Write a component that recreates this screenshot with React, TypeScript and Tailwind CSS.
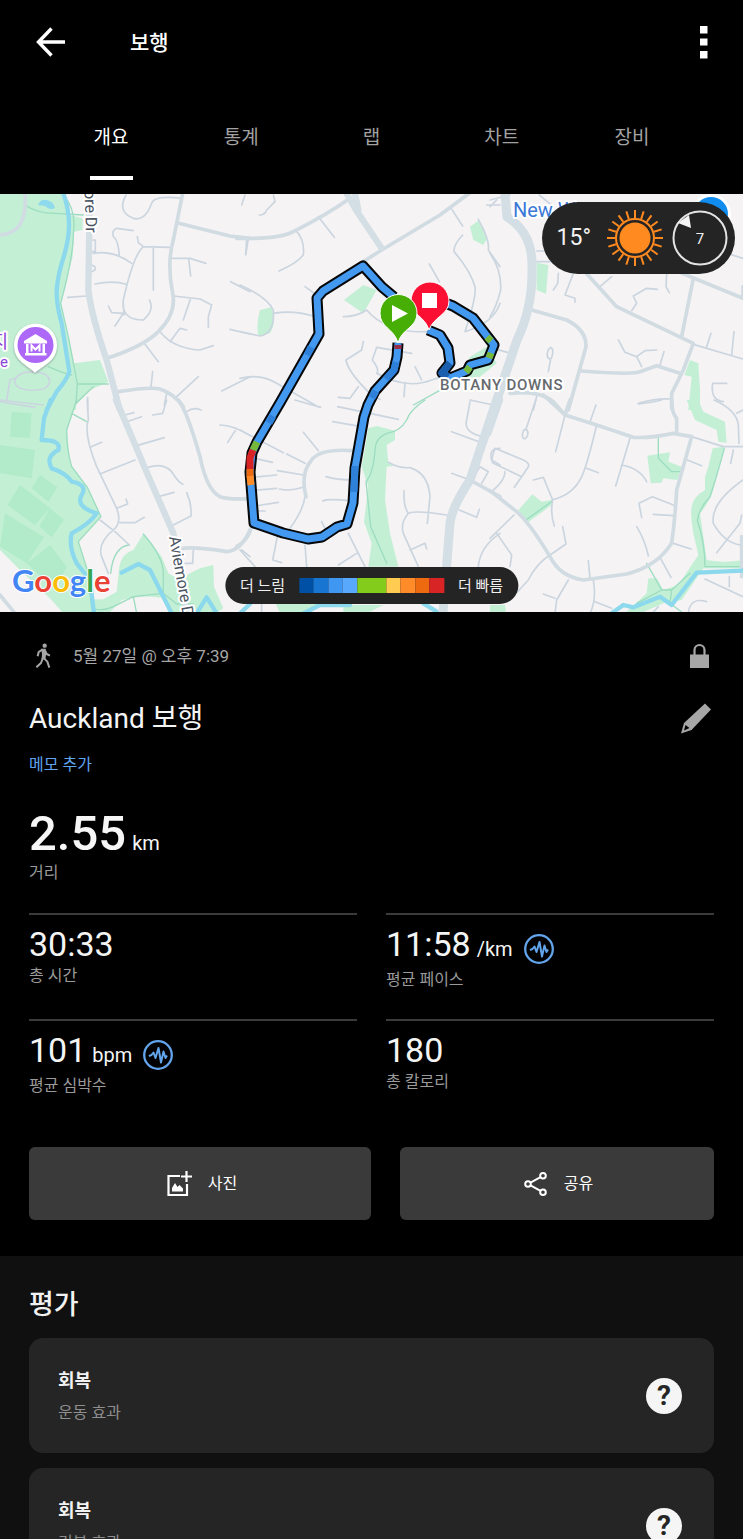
import type { ReactNode } from "react";

const tabs = ["개요", "통계", "랩", "차트", "장비"];

const paceColors = [
  "flex-1 bg-[#0050a5]",
  "flex-1 bg-[#1876d2]",
  "flex-1 bg-[#4097f2]",
  "flex-1 bg-[#58a8fd]",
  "flex-2 bg-[#84cc1c]",
  "flex-1 bg-[#ffcb50]",
  "flex-1 bg-[#ff8c28]",
  "flex-1 bg-[#ee6a10]",
  "flex-1 bg-[#d82424]",
];

type Tile = {
  x: number;
  y: number;
  parks: string;
  fields?: string;
  minor: string;
  mid: string;
  major: string;
  trails?: string;
  water?: string;
};

const tiles: Tile[] = [
  {
    x: 0,
    y: 190,
    parks:
      "M0 0H190L210 75L248 85V120L222 125L218 200L182 340L205 440L222 520L300 510L325 575L270 600L228 645V660H0Z",
    minor:
      "M378 15Q350 65 400 85Q435 95 455 40Q462 15 545 25M400 122L350 115Q335 120 340 140Q355 150 358 198M280 190Q340 180 395 220M508 172L430 170Q400 195 370 330Q362 390 430 390Q465 360 448 330M430 170L415 158L412 140M460 170V300M285 282Q340 270 378 283M325 348L335 368L370 370L345 408M370 340L372 375M203 322L260 318M518 205L570 205L618 220M566 205L572 258M520 318L600 327L635 345L625 380V412M572 325L550 390M480 425Q520 475 600 480L640 467M510 455L540 415L560 420M435 463L475 515M453 590L458 545M530 620L595 560M665 603L750 560M690 418L750 432M692 275L750 305M745 145L738 190M500 610L493 645M725 45L735 15M263 622V660M45 570Q55 545 100 545Q155 550 148 580Q140 605 85 600Q40 595 45 570M0 630L130 645M20 630L30 570L45 565M270 150h16v35h-16M275 225l10 5v10l-10 5",
    mid: "M530 98L690 138L750 145M355 605Q450 590 480 597Q520 610 550 650M320 505Q430 470 475 425Q530 370 518 310Q500 220 520 150L548 10M0 135Q85 130 75 10",
    major: "M268 10V110L265 300Q275 380 320 510L358 655",
    trails:
      "M75 45Q110 70 165 70L250 75M190 15Q230 60 220 130Q220 200 182 340L205 440L232 582H325M145 530Q190 550 215 555M232 582L228 640L280 590",
    water:
      "M190 10C215 80 212 140 185 220C165 290 165 330 185 400L208 545Q200 570 170 605L140 660",
  },
  {
    x: 0,
    y: 400,
    parks:
      "M0 0H232L200 90L210 190L262 262L303 350L235 425L262 510L275 640H190L150 595L60 510L0 450ZM230 600L310 598L350 575L358 500Q365 460 400 450L430 402L485 470L505 520L540 540L570 520L600 505L640 495L642 560L670 625L640 645H215Z",
    fields:
      "M35 35L95 40L90 115L30 110ZM0 135L105 150L95 235L0 220ZM120 225L172 262L145 305L95 265ZM60 255L150 325L105 375L22 315ZM150 325L192 360L155 412L118 378ZM15 340L132 412L80 490L0 440ZM80 490L150 435L200 500L165 570Z",
    minor:
      "M262 0L265 60Q250 100 290 200L350 325Q365 365 345 385Q290 430 305 470L325 520M305 220L405 180M270 142L305 127M350 325L383 312L378 297M360 368L405 368L433 352M300 360L345 395L388 435M410 137L493 113M380 65L425 50M375 45L402 38M458 45L488 40L500 0M560 35Q580 20 603 30M435 205Q500 180 525 230Q535 245 548 253M475 290L522 277M520 375L573 348Q575 310 560 278M660 75Q700 75 750 107M710 85L683 127M580 450L578 490H555M725 450L750 470M0 5L105 22",
    mid: "M535 0Q560 30 600 170Q620 270 660 290Q690 300 750 295M545 445Q590 440 680 455Q725 450 750 390M0 585L45 640",
    major: "M348 0Q400 120 435 205L520 400L560 640",
    trails:
      "M230 0L200 90Q200 150 215 200L262 262L303 350L235 425L262 510L275 625Q310 635 340 620L400 590L490 580L530 612H580M388 435Q340 440 332 520M430 402Q490 470 490 520V590M215 40L260 65M400 590L410 640",
    water:
      "M152 0L132 55L125 120Q185 120 175 150Q135 170 155 205Q200 220 215 245Q265 255 245 285Q225 320 290 340Q270 370 215 400Q205 440 230 490L270 540L282 640M365 518L415 492L450 510L515 640M590 640L620 592L650 640",
  },
  {
    x: 240,
    y: 190,
    parks:
      "M370 285L410 300L370 370L312 330ZM60 360L95 352Q112 395 90 430L55 438Q48 400 60 360ZM690 110L715 92L742 145L730 165L700 150ZM690 500L740 470L770 520L720 560L650 570Z",
    minor:
      "M100 15L105 35L80 60Q75 75 58 75M235 80L283 142M20 150L17 195M168 122Q195 150 190 195Q170 220 117 243M630 50L668 108M668 135Q640 165 642 185Q690 240 705 290Q710 320 675 425M715 88Q750 150 745 180L780 230M780 340Q760 400 675 425M0 285Q80 320 100 360Q105 430 60 438L0 425M100 370Q160 360 220 378M310 380Q350 380 380 360Q440 430 560 425M568 222L598 275M195 290L230 315M515 490L410 472L397 510Q420 540 410 550Q500 600 575 570Q640 550 690 530M0 565Q60 550 110 580L225 645M370 455L365 480L318 510Q325 550 400 620L420 628M295 622L330 625L355 590M525 530L545 570M495 578L492 620M740 45H780M750 50L770 30",
    mid: "M-10 145Q120 148 160 125Q260 75 330 25M370 215L425 180L600 75L690 8",
    major: "M320 10L348 60L425 175M345 10L355 60",
    trails: "M520 645L620 590",
  },
  {
    x: 490,
    y: 190,
    parks:
      "M140 218L175 225L168 312L140 300ZM600 510L625 520L630 600V660H595L605 560L583 555Z",
    minor:
      "M0 190Q35 240 32 300Q20 350 0 380M20 478L55 488M140 215H200M140 183H160M205 250L203 280L190 300M250 250L225 315L255 325V337M330 290L365 260M425 362L440 340L430 318L470 295L502 298M530 250L528 290L538 308M650 470L663 430M725 495L732 425M385 450L405 487L440 500L455 530M440 500L465 482L500 480M510 525L522 485M175 545L182 507M182 473Q190 475 188 490Q185 508 180 507Q170 505 172 490Q175 475 182 473M668 580H710M668 580Q660 630 700 635M445 640Q500 625 540 627M148 15L190 50M0 30L60 15M610 463L759 507M680 180L759 205M140 620L130 660",
    mid: "M125 360L230 390Q290 420 288 470L235 660M275 543Q430 555 450 545L500 527L570 550M280 240L380 350L610 460L580 540L545 610V655M610 265L575 440M540 235L759 325L759 290M60 610Q150 600 190 635L225 675",
    major: "M45 10L50 80Q130 130 125 230Q130 350 80 450L15 660",
  },
  {
    x: 240,
    y: 400,
    parks:
      "M385 85L410 78L465 92V120L440 135L445 190L462 198L440 200L435 300L450 400L475 500H385L395 430L372 365L385 260L365 200ZM105 605H240L210 640H120ZM310 615H430L380 640H310Z",
    minor:
      "M0 90L130 158M190 97L235 152M140 162L195 190M112 212L190 225M45 175L97 187M35 232L110 225M30 272L110 265M118 267Q150 275 188 262M45 318L115 307M55 333H75M258 230Q290 240 340 240M248 303Q265 295 335 303M293 20L475 58M278 65L365 80M165 0L242 22M445 187Q475 205 510 203Q565 220 570 290L562 370M492 272Q490 320 505 340Q480 370 490 400L535 500M505 340Q530 330 620 345M510 450L555 430L560 447M690 5L680 60Q670 95 720 108M635 95L725 128M635 220L690 240M658 330L710 352L718 328M780 400Q720 440 715 500M115 395L98 480L125 488M195 435L200 500M295 495L350 460M325 400Q360 470 375 500M0 450L45 500M245 365L260 395M195 290Q190 330 150 385M690 250L720 200L745 215L725 250M780 145Q745 145 755 180L780 195M65 610V640M690 0L760 15",
    mid: "M340 152Q240 145 215 180Q180 220 198 290M690 240L780 290M-10 440Q25 420 35 380M0 297H15",
    major: "M775 -10L690 240Q635 320 630 370L605 640",
    trails: "M555 0Q510 30 500 60Q480 95 440 100Q405 115 405 150Q400 220 378 245L392 380L440 490",
    water: "M0 640L30 612M190 640L240 615H330M550 610L590 635",
  },
  {
    x: 490,
    y: 400,
    parks:
      "M590 0L615 60L680 90L685 125L710 128L705 65L640 35L625 0ZM668 145L703 140L675 250Q665 300 630 340L650 480Q700 490 759 480V505H640L575 600L520 610L440 645H400L470 580L475 535H500L520 570L565 555L625 465L610 400Q600 340 605 320Q610 290 645 270L645 230L655 200ZM472 167L540 157L535 185L575 200L562 240L520 235L515 248L482 250ZM85 330L127 283L155 305L185 300V315L110 370ZM0 615H45L48 640H0Z",
    minor:
      "M605 110L700 140H759M320 75Q290 200 275 230Q250 285 185 300M197 155L225 45M300 65L318 15M420 115L390 215L377 258M395 195Q450 205 470 245M290 205L325 218M137 0L108 88M106 88Q116 90 113 105Q108 118 102 116Q95 112 98 100Q100 88 106 88M15 145L100 180Q120 190 115 200L95 230L10 190Q0 185 15 145M95 230L73 262M45 215Q45 240 10 270M130 240L160 232L188 300Q180 340 193 378M218 380L228 432L180 465Q140 490 115 540L60 600M72 345L0 415M20 400L65 465L60 500M295 482L300 535M235 540L200 600L195 640M310 540Q320 600 300 640M440 380Q465 420 475 468M510 472L543 532M550 430L603 447M550 315L487 290L447 310L455 353M490 343L550 347M592 180L635 197M672 0Q740 30 745 75L747 130M740 40L759 30M730 150L722 190M759 240Q660 310 670 370Q700 425 750 435M680 458L750 370L755 345M445 12Q480 10 515 0M645 537L759 590M718 530V560M650 605Q600 590 595 640M160 582L195 595M315 605L365 625M505 620L487 640",
    mid: "M160 -15L225 45L320 75L430 112Q480 115 550 100L605 110L560 270Q555 360 545 430Q500 500 410 522L280 540Q210 530 180 470Q120 370 80 335L0 272M240 0L225 45M545 0Q545 40 560 55V100M755 410V530",
    major: "M30 0L-5 100",
    trails:
      "M505 112V175L545 215H570M105 362L185 305M703 145Q680 230 660 290Q630 320 622 360Q645 430 645 500H759M470 490L515 570H545L600 520M515 570L440 610M545 570L540 610L580 640",
    water: "M365 640L400 615L430 622L510 590L545 615L620 518L759 512",
  },
];

const route =
  "M398 343L397 357L394 370L375 391L368 405L364 417L355 468L353 503L347 524L337 527L322 537L308 539L283 533L254 523L250 472L252 453L257 442L281 401L319 334L317 298L323 291L363 266L382 287L394 297M440 301L453 306L473 318L494 345L488 360L470 365L467 371L450 378L442 373L450 363L448 348L440 335L428 330";

function Layer({ pick, ...rest }: { pick: (t: Tile) => string | undefined } & React.SVGProps<SVGGElement>) {
  return (
    <g {...rest}>
      {tiles.map((t) => (
        <path key={`${t.x}-${t.y}`} transform={`translate(${t.x} ${t.y}) scale(0.33333)`} d={pick(t) || "M0 0"} />
      ))}
    </g>
  );
}

function MapCanvas() {
  return (
    <svg
      className="block h-full w-full"
      viewBox="0 194 743 418"
      preserveAspectRatio="xMidYMid slice"
      role="img"
      aria-label="경로 지도"
    >
      <rect y="190" width="743" height="425" fill="#f5f3f4" />
      <Layer pick={(t) => t.parks} fill="#c3f0d5" />
      <path d="M108 614L122 600Q145 594 162 598L175 614Z" fill="#f5f3f4" />
      <Layer pick={(t) => t.fields} fill="#b1ebca" />
      <path d="M38 205Q40 199 47 200Q54 202 55 208Q50 211 45 206Z" fill="#90daee" />
      <g fill="none" strokeLinecap="round" strokeLinejoin="round">
        <Layer pick={(t) => t.trails} stroke="#9cdcc0" strokeWidth="4" />
        <Layer pick={(t) => t.minor} stroke="#cbd5df" strokeWidth="5" />
        <Layer pick={(t) => t.mid} stroke="#d1dbe2" strokeWidth="11" />
        <Layer pick={(t) => t.water} stroke="#8cd9ee" strokeWidth="13" />
        <Layer pick={(t) => t.major} stroke="#d3dee5" strokeWidth="19" />
        <path
          d="M505 194L507 217Q533 233 532 267Q533 307 517 340L495 405L470 480Q452 507 450 523L443 612"
          stroke="#d3dee5"
          strokeWidth="9"
        />
      </g>

      <g fill="none" strokeLinejoin="round">
        <path d={route} stroke="#050708" strokeWidth="11" />
        <path d={route} stroke="#4398f0" strokeWidth="7" />
        <g strokeWidth="7">
          <path d="M398 345V349" stroke="#9c2f45" />
          <path d="M396 362L394 370L386 379M355 466L354 492M311 347L307 355M273 416L269 423M376 391L372 398" stroke="#2e80d8" />
          <path d="M450 363L442 373L448 377" stroke="#1a5fae" />
          <path d="M257 442L253 450M487 337L491 341M491 353L489 358M470 367L466 372" stroke="#76b83a" />
          <path d="M253 450L250 458V469" stroke="#d82424" />
          <path d="M250 469V477" stroke="#ee6a10" />
          <path d="M250 476L251 485" stroke="#ff8c28" />
        </g>
      </g>

      <g stroke="#fff">
        <path
          d="M429 330C425 316 411 315 411 301A18.500 18.500 0 0 1 449 301C449 315 434 316 429 330Z"
          fill="#fb0f32"
          strokeWidth="1"
        />
        <path
          d="M398 343C394 328 380 328 380 313A18.500 18.500 0 0 1 417 313C417 328 402 328 398 343Z"
          fill="#46ae04"
          strokeWidth="1"
        />
      </g>
      <path d="M422 293H437V308H422ZM392 305L408 313.500L392 322Z" fill="#fff" />

      <circle cx="711" cy="214" r="20" fill="#fff" />
      <circle cx="711" cy="214" r="17" fill="#118df0" />

      <g filter="drop-shadow(0 1px 1px rgb(0 0 0 / 0.3))">
        <path d="M35 373C28 365 14 362 14 345A21 21 0 0 1 57 345C57 362 43 365 35 373Z" fill="#fff" />
      </g>
      <circle cx="35.500" cy="345" r="18" fill="#ad68f7" />
      <path
        d="M35.500 334L47 341V343.500H24V341ZM26 344H28.500V353H26ZM42.500 344H45V353H42.500ZM25 353H46.500V355.500H25Z"
        fill="#fff"
      />
      <path d="M31.500 351.500V345.500L35.500 349.500L39.500 345.500V351.500" fill="none" stroke="#fff" strokeWidth="2" />

      <g stroke="#fff" strokeWidth="4" strokeLinejoin="round" paintOrder="stroke">
        <text className="text-[15px] font-medium tracking-wider" x="440" y="390" fill="#666a6e">
          BOTANY DOWNS
        </text>
        <text className="text-[20px]" x="513" y="217" fill="#3b78d8">
          New W
        </text>
        <text className="text-[16px]" transform="translate(169 537) rotate(80)" fill="#4b5563">
          Aviemore Dr
        </text>
        <text className="text-[16px]" transform="translate(86 233) rotate(88)" textAnchor="end" fill="#4b5563">
          Aviemore Dr
        </text>
        <text className="text-[18px]" x="8" y="348" textAnchor="end" fill="#8b46d8">
          지
        </text>
        <text className="text-[15px]" x="8" y="367" textAnchor="end" fill="#8b46d8">
          e
        </text>
      </g>
      <text
        className="font-['Lato'] text-[31px] font-bold"
        x="12"
        y="592"
        stroke="#fff"
        strokeWidth="2"
        strokeLinejoin="round"
        paintOrder="stroke"
      >
        <tspan fill="#4285f4">G</tspan>
        <tspan fill="#ea4335">o</tspan>
        <tspan fill="#fbbc05">o</tspan>
        <tspan fill="#4285f4">g</tspan>
        <tspan fill="#34a853">l</tspan>
        <tspan fill="#ea4335">e</tspan>
      </text>
    </svg>
  );
}

function SunIcon() {
  return (
    <svg className="size-[56px]" viewBox="-28 -28 56 56" aria-hidden="true">
      <circle r="15.500" fill="#ff8a20" />
      <circle r="19" fill="none" stroke="#ff8a20" strokeWidth="2" />
      {Array.from({ length: 20 }, (_, i) => (
        <path key={i} d="M0 -20V-28" stroke="#ff8a20" strokeWidth="2" transform={`rotate(${i * 18})`} />
      ))}
    </svg>
  );
}

function WindDial() {
  return (
    <svg className="size-[56px]" viewBox="-28 -28 56 56" role="img" aria-label="풍속 7">
      <circle r="26.500" fill="none" stroke="#e4e4e4" strokeWidth="2" />
      <path d="M-22 -15L-11 -23L-9 -10Z" fill="#f4f4f4" />
      <text className="text-[15px]" y="6" textAnchor="middle" fill="#f0f0f0">
        7
      </text>
    </svg>
  );
}

function WalkIcon() {
  return (
    <svg
      className="size-7"
      viewBox="27 21 84 84"
      fill="none"
      stroke="currentColor"
      strokeWidth="6"
      strokeLinejoin="round"
      aria-hidden="true"
    >
      <circle cx="74" cy="32" r="6.500" fill="currentColor" stroke="none" />
      <path d="M63 41L77 41L79 54L76 73L65 73L66 56Z" fill="currentColor" stroke="none" />
      <path d="M67 44L56 51L53 64M75 46L80 57L90 62M72 70L82 80L88 98M69 68L63 84L49 97" />
    </svg>
  );
}

function PulseIcon() {
  return (
    <svg
      className="mb-[3px] ml-[11px] mt-[9px] size-[30px] shrink-0"
      viewBox="0 0 30 30"
      fill="none"
      stroke="#62a5ec"
      aria-hidden="true"
    >
      <circle cx="15" cy="15" r="13.800" strokeWidth="2.300" />
      <path d="M6 16L8.500 15L10.500 12.500L12.500 18L15.500 8L18 22.500L20.500 11.500L22.500 18L24 15.500" strokeWidth="2" strokeLinejoin="round" />
    </svg>
  );
}

function Stat({ value, unit, label, pulse }: { value: string; unit?: string; label: string; pulse?: boolean }) {
  return (
    <div className="h-[106px] border-t-2 border-[#3b3b3b] pt-[10px]">
      <div className="flex items-start">
        <p className="text-[34px] leading-[38px] text-[#f4f4f4]">
          {value}
          {unit && <span className="ml-[6px] text-[20px] leading-none">{unit}</span>}
        </p>
        {pulse && <PulseIcon />}
      </div>
      <p className="pt-px text-[16px] leading-6 text-[#9a9a9a]">{label}</p>
    </div>
  );
}

function ActionButton({ className, icon, children }: { className: string; icon: ReactNode; children: ReactNode }) {
  return (
    <button
      type="button"
      className={`${className} flex h-[73px] items-center justify-center gap-4 rounded-md bg-[#3a3a3a] pl-[3px] text-[16px] text-white`}
    >
      {icon}
      {children}
    </button>
  );
}

function RatingCard({ title, subtitle }: { title: string; subtitle: string }) {
  return (
    <article className="flex items-center justify-between rounded-[14px] bg-[#252525] pb-7 pl-[29px] pr-8 pt-[29px]">
      <div>
        <h3 className="text-[18px] font-bold leading-7 text-[#f2f2f2]">{title}</h3>
        <p className="mt-[6px] text-[16px] leading-6 text-[#8e8e8e]">{subtitle}</p>
      </div>
      <button
        type="button"
        aria-label={`${title} 도움말`}
        className="flex size-9 items-center justify-center rounded-full bg-[#f5f5f5] text-[28px] font-bold leading-9 text-[#252525]"
      >
        ?
      </button>
    </article>
  );
}

export default function App() {
  return (
    <div
      lang="ko"
      className="flex h-screen flex-col bg-black font-['Roboto','Noto_Sans_CJK_KR',sans-serif] text-white"
    >
      <header className="shrink-0 pb-[14px]">
        <div className="flex h-[84px] items-center pl-9 pr-[31px]">
          <button type="button" aria-label="뒤로">
            <svg className="size-[30px]" viewBox="0 0 30 30" fill="none" stroke="#fff" strokeWidth="3.400">
              <path d="M29 15H3M15.500 1.500L2.500 15L15.500 28.500" />
            </svg>
          </button>
          <h1 className="ml-16 flex-1 pt-[2px] text-[21px] font-medium leading-7">보행</h1>
          <button type="button" aria-label="메뉴">
            <svg className="h-[34px] w-[17px]" viewBox="0 0 17 34" fill="#fff">
              <path d="M5 1H12.500V8.500H5ZM5 13.500H12.500V20.500H5ZM5 26H12.500V33.500H5Z" />
            </svg>
          </button>
        </div>
        <nav className="flex px-[46px] pt-10" role="tablist">
          {tabs.map((tab, i) => (
            <button key={tab} type="button" role="tab" aria-selected={i === 0} className="flex flex-1 justify-center">
              <span
                className={
                  i === 0
                    ? "border-b-4 border-white px-1 pb-6 text-[19px] leading-7 text-white"
                    : "border-b-4 border-transparent px-1 pb-6 text-[19px] leading-7 text-[#a3a3a3]"
                }
              >
                {tab}
              </span>
            </button>
          ))}
        </nav>
      </header>

      <main className="min-h-0 flex-1 overflow-y-auto [scrollbar-width:none]">
        <section className="relative h-[418px]">
          <MapCanvas />
          <div className="absolute right-2 top-2 flex h-[72px] items-center rounded-full bg-[#242424] pl-[15px] pr-[7px]">
            <span className="text-[23px] leading-8 text-[#f2f2f2]">15°</span>
            <span className="ml-4 mr-[9px]">
              <SunIcon />
            </span>
            <WindDial />
          </div>
          <div className="absolute bottom-2 left-1/2 flex h-[37px] -translate-x-1/2 items-center gap-[14px] rounded-full bg-[#242424] px-[15px] text-[15px] leading-6 text-[#f0f0f0]">
            <span>더 느림</span>
            <div className="flex h-[15px] w-[145px]">
              {paceColors.map((c) => (
                <span key={c} className={c} />
              ))}
            </div>
            <span>더 빠름</span>
          </div>
        </section>

        <section className="px-[29px] pb-9 pt-7">
          <div className="flex h-8 items-center text-[#a6a6a6]">
            <WalkIcon />
            <p className="ml-4 flex-1 text-[17px] leading-6">5월 27일 @ 오후 7:39</p>
            <svg className="mr-1 h-[26px] w-5" viewBox="0 0 20 26" role="img" aria-label="비공개">
              <path d="M0 11.500H19V25H0Z" fill="currentColor" />
              <path d="M4.500 12V7A5 5 0 0 1 14.500 7V12" fill="none" stroke="currentColor" strokeWidth="2.200" />
            </svg>
          </div>

          <div className="mt-[27px] flex h-10 items-center justify-between">
            <h2 className="text-[28px] leading-10 text-[#f4f4f4]">Auckland 보행</h2>
            <button type="button" aria-label="이름 수정" className="mr-[2px] text-[#a6a6a6]">
              <svg className="size-8" viewBox="0 0 32 32" fill="currentColor">
                <path d="M25 0.500L31 6.500L11.500 27L1 30.500L4 20ZM5.500 22L4 27.500L9.500 25Z" fillRule="evenodd" />
              </svg>
            </button>
          </div>
          <a href="#memo" className="mt-[14px] block w-fit text-[16px] leading-6 text-[#5fa4ee]">
            메모 추가
          </a>

          <p className="mt-[30px] text-[49px] font-medium leading-[54px] text-[#f6f6f6]">
            2.55<span className="ml-[6px] text-[20px] font-normal leading-none">km</span>
          </p>
          <p className="text-[16px] leading-6 text-[#9a9a9a]">거리</p>

          <div className="mt-7 grid grid-cols-2 gap-x-[29px]">
            <Stat value="30:33" label="총 시간" />
            <Stat value="11:58" unit="/km" label="평균 페이스" pulse />
            <Stat value="101" unit="bpm" label="평균 심박수" pulse />
            <Stat value="180" label="총 칼로리" />
          </div>

          <div className="mt-[22px] flex gap-[29px]">
            <ActionButton
              className="flex-[12]"
              icon={
                <svg className="size-[26px]" viewBox="0 0 26 26" fill="none" stroke="#fff" strokeWidth="2.200" aria-hidden="true">
                  <path d="M14 5H2.500V24H21V13M20.500 0V11M15 5.500H26" />
                  <path d="M6 20.500V17L9 12L11.500 16L13.500 14L17 17.500V20.500Z" fill="#fff" stroke="none" />
                </svg>
              }
            >
              사진
            </ActionButton>
            <ActionButton
              className="flex-[11]"
              icon={
                <svg className="size-6" viewBox="0 0 24 24" fill="none" stroke="#fff" strokeWidth="2" aria-hidden="true">
                  <circle cx="4" cy="12" r="2.800" />
                  <circle cx="19" cy="3.800" r="2.800" />
                  <circle cx="19" cy="20.200" r="2.800" />
                  <path d="M6.500 10.600L16.500 5.200M6.500 13.400L16.500 18.800" />
                </svg>
              }
            >
              공유
            </ActionButton>
          </div>
        </section>

        <section className="bg-[#101010] px-[29px] pb-9 pt-[29px]">
          <h2 className="text-[27px] font-medium leading-10 text-[#f2f2f2]">평가</h2>
          <div className="mt-[13px] flex flex-col gap-[15px]">
            <RatingCard title="회복" subtitle="운동 효과" />
            <RatingCard title="회복" subtitle="기본 효과" />
          </div>
        </section>
      </main>
    </div>
  );
}
